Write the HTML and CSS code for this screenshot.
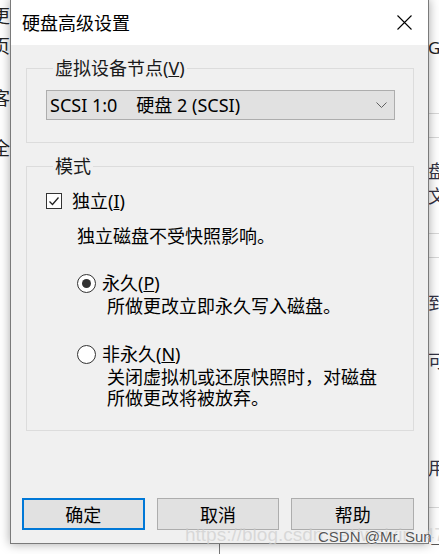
FILE: index.html
```html
<!DOCTYPE html>
<html lang="zh-CN">
<head>
<meta charset="utf-8">
<title>硬盘高级设置</title>
<link rel="stylesheet" href="styles.css">
</head>
<body>
<div class="desk">
  <div class="frag fl1">更月</div>
  <div class="frag fl2">页元</div>
  <div class="frag fl3">客湖</div>
  <div class="frag fl4">全湖</div>
  <div class="frag fr1">GB</div>
  <div class="hline h1"></div>
  <div class="hline h2"></div>
  <div class="frag fr2">盘</div>
  <div class="frag fr3">文</div>
  <div class="hline h3"></div>
  <div class="hline h4"></div>
  <div class="frag fr4">到</div>
  <div class="frag fr5">可</div>
  <div class="frag fr6">用</div>
  <div class="hline h5"></div>
  <div class="vline"></div>

  <div class="dialog">
    <div class="titlebar">
      <span class="title">硬盘高级设置</span>
      <svg class="close" width="15" height="15" viewBox="0 0 15 15"><path d="M0.5 0.5 L14.5 14.5 M14.5 0.5 L0.5 14.5" stroke="#000" stroke-width="1.1" fill="none"/></svg>
    </div>
    <div class="content">
      <fieldset class="group g1">
        <legend>虚拟设备节点(<u>V</u>)</legend>
        <div class="combo">
          <span class="combo-text"><span class="lat">SCSI 1:0</span><span class="disk">硬盘 <span class="lat">2 (SCSI)</span></span></span>
          <svg class="chev" width="11" height="6" viewBox="0 0 11 6"><path d="M0.5 0.5 L5.5 5.5 L10.5 0.5" stroke="#606060" stroke-width="1" fill="none"/></svg>
        </div>
      </fieldset>
      <fieldset class="group g2">
        <legend>模式</legend>
        <div class="check-row">
          <span class="checkbox"><svg width="14" height="14" viewBox="0 0 14 14"><path d="M2.5 7.5 L5.5 10.5 L11.5 3.5" stroke="#222" stroke-width="1.3" fill="none"/></svg></span>
          <span>独立(<u class="lat">I</u>)</span>
        </div>
        <p class="desc">独立磁盘不受快照影响。</p>
        <div class="radio-row r1">
          <span class="radio on"></span>
          <span>永久(<u class="lat">P</u>)</span>
        </div>
        <p class="sub">所做更改立即永久写入磁盘。</p>
        <div class="radio-row r2">
          <span class="radio"></span>
          <span>非永久(<u class="lat">N</u>)</span>
        </div>
        <p class="sub">关闭虚拟机或还原快照时，对磁盘<br>所做更改将被放弃。</p>
      </fieldset>
      <div class="buttons">
        <button class="btn default">确定</button>
        <button class="btn">取消</button>
        <button class="btn">帮助</button>
      </div>
    </div>
  </div>

  <div class="wm-url">https://blog.csdn.net/weixin_47576985</div>
  <div class="wm-name">CSDN @Mr. Sun_</div>
</div>
</body>
</html>
```

FILE: styles.css
```css
html, body {
  margin: 0;
  padding: 0;
}
body {
  width: 439px;
  height: 554px;
  overflow: hidden;
  background: #fff;
  font-family: "Noto Sans", "Noto Sans CJK SC", sans-serif;
  font-size: 18px;
  color: #000;
}
.desk {
  position: relative;
  width: 439px;
  height: 554px;
  overflow: hidden;
}
.frag {
  position: absolute;
  font-family: "Noto Sans CJK SC", sans-serif;
  font-size: 18px;
  line-height: 20px;
  color: #222;
}
.fl1 { left: -8px; top: 5px; }
.fl2 { left: -8px; top: 35px; }
.fl3 { left: -8px; top: 87px; }
.fl4 { left: -8px; top: 137px; }
.fr1 { left: 428px; top: 38px; font-family: "Noto Sans", sans-serif; font-size: 17px; }
.fr2 { left: 428px; top: 160px; color: #334; }
.fr3 { left: 428px; top: 185px; color: #334; }
.fr4 { left: 428px; top: 292px; color: #334; }
.fr5 { left: 428px; top: 350px; color: #334; }
.fr6 { left: 428px; top: 457px; color: #334; }
.hline {
  position: absolute;
  left: 429px;
  width: 10px;
  height: 1px;
  background: #d8d8d8;
}
.h1 { top: 113px; }
.h2 { top: 137px; }
.h3 { top: 233px; }
.h4 { top: 257px; }
.h5 { top: 507px; }
.vline {
  position: absolute;
  left: 219px;
  top: 540px;
  width: 1px;
  height: 14px;
  background: #777;
}

.dialog {
  position: absolute;
  left: 10px;
  top: -1px;
  width: 419px;
  height: 545px;
  box-sizing: border-box;
  border: 1px solid #7a7a7a;
  background: #f0f0f0;
  display: flex;
  flex-direction: column;
  box-shadow: 0 0 10px rgba(0, 0, 0, 0.35);
}
.titlebar {
  height: 45px;
  flex: none;
  background: #fff;
  display: flex;
  align-items: center;
  justify-content: space-between;
  padding: 0 16px 0 11px;
  box-sizing: border-box;
}
.title {
  font-size: 18px;
  line-height: 24px;
}
.close {
  display: block;
}
.content {
  flex: 1;
  display: flex;
  flex-direction: column;
  padding: 11px 14px 13px 15px;
}
.group {
  margin: 0;
  border: 1px solid #dcdcdc;
  min-width: 0;
}
.group legend {
  margin-left: 7px;
  padding: 0 2px;
  line-height: 24px;
  color: #1a1a1a;
}
.g1 {
  padding: 10px 18px 22px 19px;
}
.combo {
  height: 30px;
  box-sizing: border-box;
  border: 1px solid #adadad;
  background: #e1e1e1;
  display: flex;
  align-items: center;
  justify-content: space-between;
  padding: 0 7px 0 3px;
}
.combo-text {
  line-height: 24px;
}
.lat {
  font-family: "Noto Sans", sans-serif;
}
.combo .lat {
  font-size: 18px;
}
.disk {
  margin-left: 19px;
}
.g2 {
  margin-top: 11px;
  padding: 11px 18px 21px 19px;
}
.check-row {
  display: flex;
  align-items: center;
  height: 24px;
  line-height: 24px;
}
.checkbox {
  width: 16px;
  height: 16px;
  box-sizing: border-box;
  border: 1px solid #333;
  background: #fff;
  margin-right: 10px;
  display: flex;
  align-items: center;
  justify-content: center;
}
.checkbox svg {
  display: block;
}
.desc {
  margin: 11px 0 0 31px;
  line-height: 24px;
}
.radio-row {
  display: flex;
  align-items: center;
  height: 24px;
  line-height: 24px;
  margin-left: 31px;
}
.r1 { margin-top: 23px; }
.r2 { margin-top: 25px; }
.radio {
  width: 19px;
  height: 19px;
  box-sizing: border-box;
  border: 1px solid #333;
  border-radius: 50%;
  background: #fff;
  margin-right: 6px;
  display: flex;
  align-items: center;
  justify-content: center;
}
.radio.on::after {
  content: "";
  width: 9px;
  height: 9px;
  border-radius: 50%;
  background: #333;
}
.sub {
  margin: 1px 0 0 61px;
  line-height: 21px;
}
.buttons {
  margin-top: auto;
  margin-left: -4px;
  display: flex;
  gap: 12px;
}
.btn {
  width: 123px;
  height: 32px;
  box-sizing: border-box;
  border: 1px solid #adadad;
  background: #e1e1e1;
  font-family: "Noto Sans CJK SC", sans-serif;
  font-size: 18px;
  color: #000;
  padding: 0;
  line-height: 24px;
}
.btn.default {
  border: 2px solid #0078d7;
}

.wm-url {
  position: absolute;
  left: 185px;
  top: 524px;
  font-family: "Liberation Sans", sans-serif;
  font-size: 19px;
  line-height: 22px;
  color: rgba(205, 205, 205, 0.7);
  white-space: nowrap;
}
.wm-name {
  position: absolute;
  left: 318px;
  top: 528px;
  font-family: "Liberation Sans", sans-serif;
  font-size: 15px;
  line-height: 18px;
  color: #555;
  text-shadow: 0 0 2px #fff, 0 0 1px #fff;
  white-space: nowrap;
}
```
